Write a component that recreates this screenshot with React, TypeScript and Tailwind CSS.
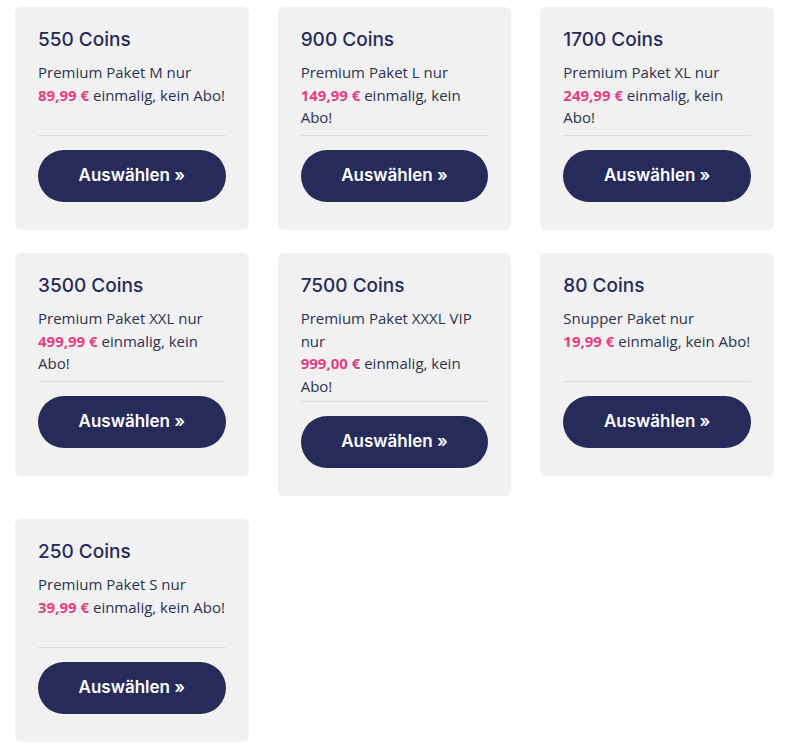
type Pack = { coins: string; name: string; price: string };

const packs: Pack[] = [
  { coins: "550 Coins", name: "Premium Paket M nur", price: "89,99 €" },
  { coins: "900 Coins", name: "Premium Paket L nur", price: "149,99 €" },
  { coins: "1700 Coins", name: "Premium Paket XL nur", price: "249,99 €" },
  { coins: "3500 Coins", name: "Premium Paket XXL nur", price: "499,99 €" },
  { coins: "7500 Coins", name: "Premium Paket XXXL VIP nur", price: "999,00 €" },
  { coins: "80 Coins", name: "Snupper Paket nur", price: "19,99 €" },
  { coins: "250 Coins", name: "Premium Paket S nur", price: "39,99 €" },
];

const heading = { fontFamily: "Inter, 'Noto Sans', sans-serif" };
const body = { fontFamily: "'Open Sans', 'Noto Sans', sans-serif" };

function PackCard({ pack }: { pack: Pack }) {
  return (
    <div className="bg-[#f1f1f2] rounded-md px-[23px] pt-[23px] pb-[28px] flex flex-col">
      <h3 style={heading} className="text-[19px] leading-5 font-medium text-[#262b5a]">
        {pack.coins}
      </h3>
      <p style={body} className="mt-[11px] min-h-[70px] text-[15px] leading-[22.5px] text-[#2e3150]">
        {pack.name}
        <br />
        <span className="font-bold text-[#e63e86]">{pack.price}</span> einmalig, kein Abo!
      </p>
      <div className="mt-[4px] border-t border-[#dcdcdf]" />
      <button
        style={heading}
        className="mt-[14px] h-[52px] w-full rounded-full bg-[#262b5a] text-white text-[17px] font-semibold"
      >
        Auswählen »
      </button>
    </div>
  );
}

export default function App() {
  return (
    <div className="bg-white min-h-[751px] pl-[15px] pr-[26px] pt-[7px]">
      <div className="grid grid-cols-3 gap-x-[29px] gap-y-[23px] items-start">
        {packs.map((p) => (
          <PackCard key={p.coins} pack={p} />
        ))}
      </div>
    </div>
  );
}
